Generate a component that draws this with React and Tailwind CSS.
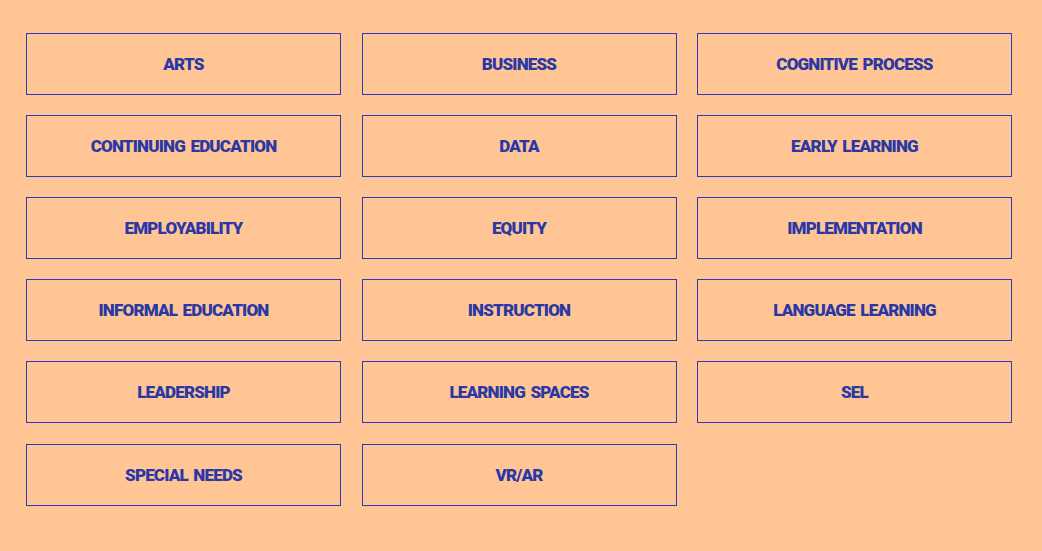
const topics = [
  'Arts', 'Business', 'Cognitive Process',
  'Continuing Education', 'Data', 'Early Learning',
  'Employability', 'Equity', 'Implementation',
  'Informal Education', 'Instruction', 'Language Learning',
  'Leadership', 'Learning Spaces', 'SEL',
  'Special Needs', 'VR/AR',
];

export default function App() {
  return (
    <div className="min-h-screen w-full bg-[#ffc594] pl-[26px] pt-[33px]" style={{ fontFamily: 'Roboto, "Liberation Sans", sans-serif' }}>
      <div className="grid grid-cols-[repeat(3,315px)] gap-x-[20.5px] gap-y-5">
        {topics.map((t, i) => (
          <a key={t} href="#"
            className={`flex h-[62px] items-center justify-center border border-[#2b3cb8] pt-[2px] text-[17px] font-black uppercase tracking-[-0.8px] [word-spacing:2px] text-[#2a38a6] ${i >= 15 ? 'mt-px' : ''}`}>
            {t}
          </a>
        ))}
      </div>
    </div>
  );
}
